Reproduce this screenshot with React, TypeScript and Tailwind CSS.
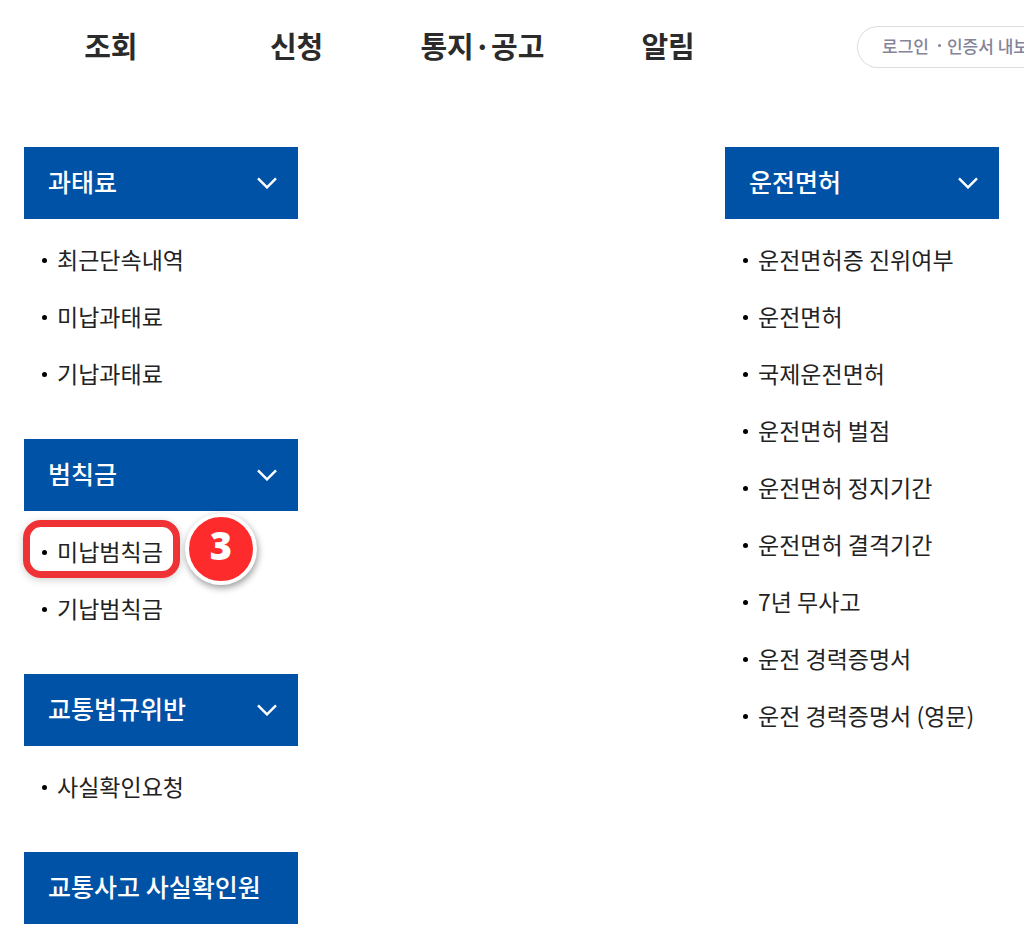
import React from 'react';

type Item = { label: string; step?: number };
type Group = { title: string; items: Item[] };

const menus = ['조회', '신청', '통지·공고', '알림'];

const leftGroups: Group[] = [
  { title: '과태료', items: [{ label: '최근단속내역' }, { label: '미납과태료' }, { label: '기납과태료' }] },
  { title: '범칙금', items: [{ label: '미납범칙금', step: 3 }, { label: '기납범칙금' }] },
  { title: '교통법규위반', items: [{ label: '사실확인요청' }] },
  { title: '교통사고 사실확인원', items: [] },
];

const rightGroups: Group[] = [
  {
    title: '운전면허',
    items: [
      { label: '운전면허증 진위여부' },
      { label: '운전면허' },
      { label: '국제운전면허' },
      { label: '운전면허 벌점' },
      { label: '운전면허 정지기간' },
      { label: '운전면허 결격기간' },
      { label: '7년 무사고' },
      { label: '운전 경력증명서' },
      { label: '운전 경력증명서 (영문)' },
    ],
  },
];

function Chevron() {
  return (
    <svg className="h-3 w-5" viewBox="0 0 20 12" fill="none" stroke="currentColor" strokeWidth="2.4" aria-hidden="true">
      <path d="M1 1.4 L10 10.4 L19 1.4" />
    </svg>
  );
}

function StepMarker({ step }: { step: number }) {
  return (
    <>
      <span className="pointer-events-none absolute -top-1 -left-px h-[58px] w-[157px] rounded-[18px] border-[7px] border-[#ee3235] shadow-[0_2px_8px_rgba(0,0,0,0.18)]" />
      <span className="absolute -top-[11px] left-[161px] flex size-[72px] items-center justify-center rounded-full border-4 border-white bg-[#fe2b2c] pb-2 font-['Open_Sans','Noto_Sans',sans-serif] text-[38px] leading-none font-extrabold text-white shadow-[1px_3px_7px_rgba(0,0,0,0.4)]">
        {step}
      </span>
    </>
  );
}

function MenuGroup({ group }: { group: Group }) {
  return (
    <section>
      <h2>
        <button
          type="button"
          className="flex h-[72px] w-full items-center justify-between bg-[#0052a6] pr-[21px] pl-6 text-[25px] font-medium text-white"
        >
          <span className="pb-1 leading-8 whitespace-nowrap">{group.title}</span>
          {group.items.length > 0 && <Chevron />}
        </button>
      </h2>
      {group.items.length > 0 && (
        <ul className="pt-[13px]">
          {group.items.map((item) => (
            <li key={item.label} className="relative flex h-[57px] items-center pl-[18px]">
              <span className="mr-2.5 size-[5px] rounded-full bg-black" />
              <a href="#" className="pb-[3px] text-[23px] leading-8 whitespace-nowrap text-[#222]">
                {item.label}
              </a>
              {item.step !== undefined && <StepMarker step={item.step} />}
            </li>
          ))}
        </ul>
      )}
    </section>
  );
}

export default function App() {
  return (
    <div className="overflow-hidden bg-white font-['Noto_Sans_CJK_KR',sans-serif] text-[#222]">
      <header className="flex h-[93px] items-center pl-[18px]">
        <nav className="grid grow grid-cols-4 pb-1">
          {menus.map((menu) => (
            <a key={menu} href="#" className="text-center text-[29px] leading-10 font-bold whitespace-nowrap text-[#2b2b2b]">
              {menu}
            </a>
          ))}
        </nav>
        <div className="ml-24 flex h-[42px] w-[167px] shrink-0 items-center overflow-hidden rounded-l-full border border-r-0 border-[#dcdce2] pb-[2px] pl-6 text-[17px] leading-6 font-medium whitespace-nowrap text-[#84849a]">
          <a href="#">로그인</a>
          <span className="mr-1.5 ml-[9px] size-[3px] shrink-0 rounded-full bg-[#84849a]" />
          <a href="#">인증서 내보</a>
        </div>
      </header>
      <main className="flex items-start justify-between pt-[54px] pr-[25px] pl-6">
        <div className="flex w-[274px] flex-col gap-9">
          {leftGroups.map((group) => (
            <MenuGroup key={group.title} group={group} />
          ))}
        </div>
        <div className="flex w-[274px] flex-col gap-9">
          {rightGroups.map((group) => (
            <MenuGroup key={group.title} group={group} />
          ))}
        </div>
      </main>
    </div>
  );
}
